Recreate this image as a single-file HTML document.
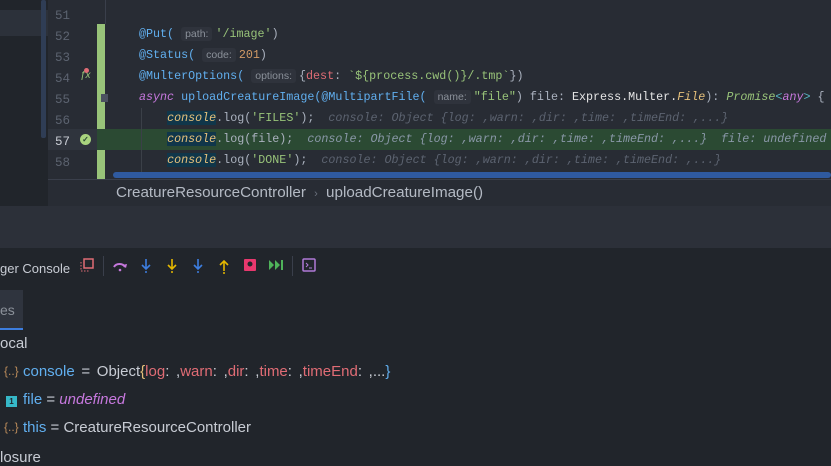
<!DOCTYPE html>
<html><head><meta charset="utf-8"><style>
*{margin:0;padding:0;box-sizing:border-box}
body{width:831px;height:457px;overflow:hidden;background:#21252b;position:relative;font-family:"Liberation Sans",sans-serif}
.a{position:absolute}
.mono{font-family:"Liberation Mono",monospace;font-size:11.7px;white-space:pre}
.hint{background:#2f333c;color:#8b919a;font-family:"Liberation Sans",sans-serif;font-size:10.5px;padding:1px 4px;border-radius:3px;margin-right:3px}
.it{font-style:italic}
.gr{color:#5c6370}
.cs{background:#10364a;font-style:italic;color:#e5c07b}
</style></head><body>
<div class="a" style="left:0;top:0;width:48px;height:206px;background:#21252b"></div>
<div class="a" style="left:0;top:10px;width:48px;height:26px;background:#2c313a"></div>
<div class="a" style="left:41px;top:0;width:5px;height:138px;background:#2f3d55;border-radius:2px"></div>
<div class="a" style="left:48px;top:0;width:783px;height:180px;background:#282c34"></div>
<div class="a" style="left:105px;top:0;width:1px;height:24px;background:#3a3f4b"></div>
<div class="a" style="left:97px;top:24px;width:8px;height:156px;background:#98c379"></div>
<div class="a" style="left:48px;top:129px;width:783px;height:21px;background:#2b4a33"></div>
<div class="a" style="left:48px;top:129px;width:49px;height:21px;background:#2f343d"></div>
<div class="a" style="left:141px;top:108px;width:1px;height:64px;background:#3b4048"></div>
<div class="a" style="left:113px;top:172px;width:718px;height:6px;background:#2f5aa0;border-radius:3px"></div>
<div class="a" style="left:48px;top:179px;width:783px;height:1px;background:#3a3f4b"></div>
<div class="a" style="left:80px;top:134px;width:11px;height:11px;border-radius:50%;background:#a9d47f;color:#2b4a33;font-size:8px;line-height:11px;text-align:center;font-weight:bold">✓</div>
<div class="a" style="left:80px;top:70px;color:#98c379;font-size:10px;font-style:italic">ƒx</div>
<div class="a" style="left:84px;top:68px;width:5px;height:5px;border-radius:50%;background:#e06c75"></div>
<div class="a" style="left:101px;top:94px;width:7px;height:8px;background:#4b5160"></div>

<div class="a mono" style="left:55px;top:6px;line-height:21px;color:#5c6370;font-size:12.5px">51
52
53
54
55
56
<span style="color:#c8ccd4">57</span>
58</div>
<div class="a mono" style="left:139px;top:24px;line-height:21px;color:#abb2bf"><span style="color:#61afef">@Put(</span> <span class="hint">path:</span><span style="color:#98c379">'/image'</span>)
<span style="color:#61afef">@Status(</span> <span class="hint">code:</span><span style="color:#d19a66">201</span>)
<span style="color:#61afef">@MulterOptions(</span> <span class="hint">options:</span>{<span style="color:#e06c75">dest</span>: <span style="color:#98c379">`${process.cwd()}/.tmp`</span>})
<span class="it" style="color:#c678dd">async</span> <span style="color:#61afef">uploadCreatureImage(@MultipartFile(</span> <span class="hint">name:</span><span style="color:#98c379">"file"</span>) file: <span style="color:#e5e5e5">Express.Multer.</span><span class="it" style="color:#e5c07b">File</span>): <span class="it" style="color:#98c379">Promise</span><span style="color:#56b6c2">&lt;</span><span class="it" style="color:#c678dd">any</span><span style="color:#56b6c2">&gt;</span> {
    <span class="cs">console</span>.log(<span style="color:#98c379">'FILES'</span>);  <span class="it gr">console: Object {log: ,warn: ,dir: ,time: ,timeEnd: ,...}</span>
    <span class="cs">console</span>.log(file);  <span class="it" style="color:#8a98a8">console: Object {log: ,warn: ,dir: ,time: ,timeEnd: ,...}  file: undefined</span>
    <span class="cs">console</span>.log(<span style="color:#98c379">'DONE'</span>);  <span class="it gr">console: Object {log: ,warn: ,dir: ,time: ,timeEnd: ,...}</span></div>
<div class="a" style="left:48px;top:180px;width:783px;height:26px;background:#282c34"></div>
<div class="a" style="left:116px;top:184px;font-size:15.2px;color:#b4bac4;white-space:pre">CreatureResourceController <span style="color:#6b717d;font-size:11px;margin:0 4px">›</span> uploadCreatureImage()</div>
<div class="a" style="left:0;top:206px;width:831px;height:42px;background:#2c3039"></div>
<div class="a" style="left:0;top:248px;width:831px;height:209px;background:#21252b"></div>
<div class="a" style="left:0;top:261px;font-size:13px;color:#c8ccd4">ger Console</div>
<svg class="a" style="left:80px;top:256px" width="240" height="22" viewBox="0 0 240 22">
 <rect x="4" y="3" width="9" height="9" fill="none" stroke="#e06c75" stroke-width="1.5"/>
 <path d="M1 6v9h9" fill="none" stroke="#e06c75" stroke-width="1" stroke-dasharray="1.5 1.5"/>
 <line x1="23.5" y1="0" x2="23.5" y2="20" stroke="#3a3f4b"/>
 <path d="M34 11a6 5 0 0 1 11 0" fill="none" stroke="#c678dd" stroke-width="2"/>
 <path d="M42 9l4 3 1-4z" fill="#c678dd"/>
 <circle cx="40" cy="14" r="1.3" fill="#c678dd"/>
 <g stroke-width="1.6" fill="none">
 <path d="M66 3v10M62 9l4 4 4-4" stroke="#3d7ee0"/><circle cx="66" cy="16" r="1" fill="#3d7ee0"/>
 <path d="M92 3v10M88 9l4 4 4-4" stroke="#e5b800"/><circle cx="92" cy="16" r="1" fill="#e5b800"/>
 <path d="M118 3v10M114 9l4 4 4-4" stroke="#3d7ee0"/><circle cx="118" cy="16" r="1" fill="#3d7ee0"/>
 <path d="M144 5v10M140 9l4-4 4 4" stroke="#e5b800"/><circle cx="144" cy="17" r="1" fill="#e5b800"/>
 </g>
 <rect x="164" y="3" width="12" height="12" rx="1" fill="#e8386e"/>
 <circle cx="170" cy="8" r="2.5" fill="#21252b"/>
 <path d="M189 4l5 5-5 5zM195 4l5 5-5 5z" fill="#4fb35a"/><rect x="201" y="4" width="2" height="10" fill="#4fb35a"/>
 <line x1="212.5" y1="0" x2="212.5" y2="20" stroke="#3a3f4b"/>
 <rect x="223" y="3" width="12" height="12" rx="1" fill="none" stroke="#b07ad8" stroke-width="1.5"/>
 <path d="M226 7l2 2-2 2M229 12h3" stroke="#b07ad8" stroke-width="1" fill="none"/>
</svg>
<div class="a" style="left:0;top:290px;width:23px;height:40px;background:#2f343e"></div>
<div class="a" style="left:0;top:328px;width:23px;height:2px;background:#3d7ee0"></div>
<div class="a" style="left:0;top:302px;font-size:14px;color:#8b919a">es</div>
<div class="a" style="left:0;top:335px;font-size:15px;color:#c8ccd4">ocal</div>
<div class="a" style="left:4px;top:364px;font-size:12px;color:#b98a5a">{..}</div>
<div class="a" style="left:23px;top:363px;font-size:15px;color:#c8ccd4;white-space:pre;word-spacing:2.5px"><span style="color:#61afef">console</span> = Object<span style="color:#e5c07b">{</span><span style="color:#e06c75">log</span>: ,<span style="color:#e06c75">warn</span>: ,<span style="color:#e06c75">dir</span>: ,<span style="color:#e06c75">time</span>: ,<span style="color:#e06c75">timeEnd</span>: ,...<span style="color:#61afef">}</span></div>
<div class="a" style="left:6px;top:396px;width:11px;height:11px;background:#36b8c8;color:#21252b;font-size:8px;line-height:11px;text-align:center;font-weight:bold">1</div>
<div class="a" style="left:23px;top:391px;font-size:15px;color:#c8ccd4"><span style="color:#61afef">file</span> = <i style="color:#c678dd">undefined</i></div>
<div class="a" style="left:4px;top:420px;font-size:12px;color:#b98a5a">{..}</div>
<div class="a" style="left:23px;top:419px;font-size:15px;color:#c8ccd4"><span style="color:#61afef">this</span> = CreatureResourceController</div>
<div class="a" style="left:0;top:449px;font-size:15px;color:#c8ccd4">losure</div>
</body></html>
